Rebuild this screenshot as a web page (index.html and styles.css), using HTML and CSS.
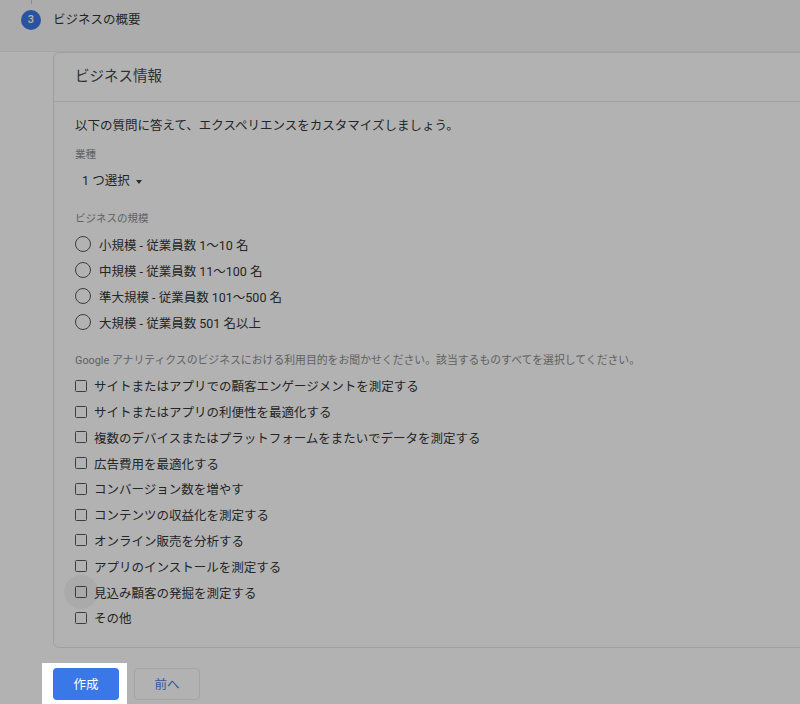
FILE: index.html
```html
<!DOCTYPE html>
<html lang="ja">
<head>
<meta charset="utf-8">
<link rel="stylesheet" href="styles.css">
</head>
<body>
<div class="step-band">
  <div class="step-marker">
    <div class="step-line"></div>
    <div class="step-num">3</div>
  </div>
  <div class="step-title">ビジネスの概要</div>
</div>

<div class="card">
  <div class="card-head">ビジネス情報</div>
  <div class="card-body">
    <p class="intro">以下の質問に答えて、エクスペリエンスをカスタマイズしましょう。</p>

    <div class="label label-industry">業種</div>
    <div class="select">1 つ選択 <span class="caret"></span></div>

    <div class="label label-size">ビジネスの規模</div>
    <div class="radios">
      <div class="radio-row"><span class="radio"></span><span>小規模 - 従業員数 1〜10 名</span></div>
      <div class="radio-row"><span class="radio"></span><span>中規模 - 従業員数 11〜100 名</span></div>
      <div class="radio-row"><span class="radio"></span><span>準大規模 - 従業員数 101〜500 名</span></div>
      <div class="radio-row"><span class="radio"></span><span>大規模 - 従業員数 501 名以上</span></div>
    </div>

    <div class="label label-use">Google アナリティクスのビジネスにおける利用目的をお聞かせください。該当するものすべてを選択してください。</div>
    <div class="checks">
      <div class="check-row"><span class="check"></span><span>サイトまたはアプリでの顧客エンゲージメントを測定する</span></div>
      <div class="check-row"><span class="check"></span><span>サイトまたはアプリの利便性を最適化する</span></div>
      <div class="check-row"><span class="check"></span><span>複数のデバイスまたはプラットフォームをまたいでデータを測定する</span></div>
      <div class="check-row"><span class="check"></span><span>広告費用を最適化する</span></div>
      <div class="check-row"><span class="check"></span><span>コンバージョン数を増やす</span></div>
      <div class="check-row"><span class="check"></span><span>コンテンツの収益化を測定する</span></div>
      <div class="check-row"><span class="check"></span><span>オンライン販売を分析する</span></div>
      <div class="check-row"><span class="check"></span><span>アプリのインストールを測定する</span></div>
      <div class="check-row"><span class="check hover"></span><span>見込み顧客の発掘を測定する</span></div>
      <div class="check-row"><span class="check"></span><span>その他</span></div>
    </div>
  </div>
</div>

<div class="actions">
  <div class="primary-wrap">
    <button class="btn btn-primary">作成</button>
    <div class="spotlight"></div>
  </div>
  <button class="btn btn-secondary">前へ</button>
</div>
</body>
</html>
```

FILE: styles.css
```css
html, body {
  margin: 0;
  padding: 0;
  background: #ffffff;
  overflow: hidden;
  width: 800px;
  height: 704px;
}

body {
  font-family: Roboto, "Noto Sans CJK JP", sans-serif;
  color: #333639;
  font-size: 12.5px;
}

.step-band {
  height: 51px;
  background: #f6f6f6;
  border-bottom: 1px solid #ededed;
  display: flex;
  align-items: flex-start;
  padding-left: 21px;
}

.step-marker {
  display: flex;
  flex-direction: column;
  align-items: center;
  width: 20px;
}

.step-line {
  width: 1px;
  height: 4px;
  background: #c8c8c8;
  margin-bottom: 6px;
}

.step-num {
  width: 20px;
  height: 20px;
  border-radius: 50%;
  background: #3b78e7;
  color: #ffffff;
  font-size: 11px;
  line-height: 20px;
  text-align: center;
  font-weight: 500;
}

.step-title {
  margin-left: 12px;
  margin-top: 11px;
  line-height: 18px;
  font-size: 12.5px;
}

.card {
  margin-left: 53px;
  width: 770px;
  border: 1px solid #e6e6e6;
  border-radius: 6px;
  background: #ffffff;
}

.card-head {
  height: 48px;
  line-height: 48px;
  padding-left: 21px;
  font-size: 14.5px;
  color: #45484b;
  border-bottom: 1px solid #e6e6e6;
}

.card-body {
  padding: 15px 0 16px 21px;
}

.intro {
  margin: 0;
  line-height: 18px;
  font-size: 12.5px;
}

.label {
  font-size: 10.5px;
  line-height: 14px;
  color: #8c8c8c;
}

.label-industry { margin-top: 13px; }
.label-size { margin-top: 18px; }
.label-use { margin-top: 19px; font-size: 10.85px; }

.select {
  margin-top: 6px;
  height: 26px;
  line-height: 26px;
  padding-left: 7px;
  display: flex;
  align-items: center;
  gap: 6px;
}

.caret {
  width: 0;
  height: 0;
  border-left: 3.5px solid transparent;
  border-right: 3.5px solid transparent;
  border-top: 4px solid #3c4043;
  margin-top: 1px;
}

.radios {
  margin-top: 5px;
}

.radio-row, .check-row {
  display: flex;
  align-items: center;
  gap: 7px;
}

.radio-row { height: 26px; }
.check-row { height: 25.78px; }

.radio {
  width: 14px;
  height: 14px;
  border: 1.8px solid #55595c;
  border-radius: 50%;
  flex: none;
}

.radio-row .radio { margin-right: 1px; }

.checks { margin-top: 5px; }

.check {
  width: 10px;
  height: 10px;
  border: 1.8px solid #55595c;
  border-radius: 1.5px;
  flex: none;
  position: relative;
}

.check.hover::before {
  content: "";
  position: absolute;
  left: -12px;
  top: -12px;
  width: 34px;
  height: 34px;
  border-radius: 50%;
  background: rgba(0, 0, 0, 0.045);
}

.actions {
  display: flex;
  gap: 15px;
  margin-left: 53px;
  margin-top: 20px;
}

.primary-wrap {
  position: relative;
}

.btn {
  height: 32px;
  border-radius: 4px;
  font-family: Roboto, "Noto Sans CJK JP", sans-serif;
  font-size: 12.5px;
  padding: 0;
  cursor: pointer;
}

.btn-primary {
  width: 66px;
  background: #3b78e7;
  color: #ffffff;
  border: none;
  display: block;
}

.btn-secondary {
  width: 66px;
  background: #ffffff;
  color: #4a7fe0;
  border: 1px solid #ececec;
}

.spotlight {
  position: absolute;
  left: -11px;
  top: -5px;
  width: 85px;
  height: 45px;
  box-shadow: 0 0 0 2000px rgba(0, 0, 0, 0.3);
  z-index: 10;
  pointer-events: none;
}
```
